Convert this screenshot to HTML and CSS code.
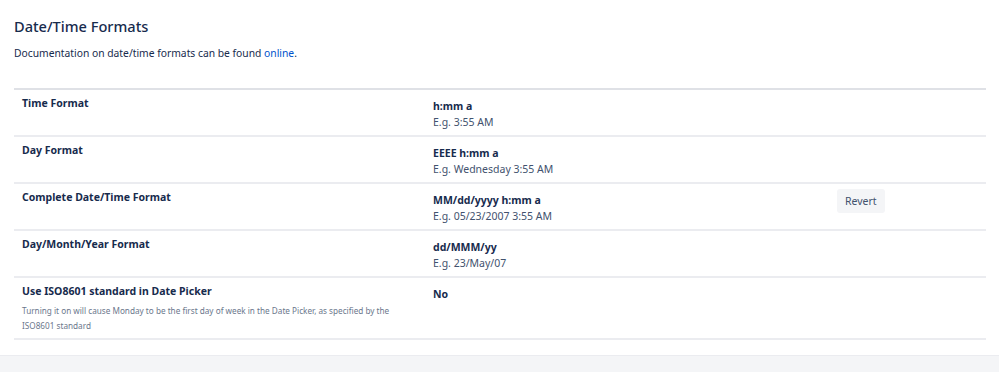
FILE: index.html
```html
<!DOCTYPE html>
<html lang="en">
<head>
<meta charset="UTF-8" />
<meta name="viewport" content="width=device-width, initial-scale=1" />
<title>Date/Time Formats</title>
<link rel="stylesheet" href="styles.css">
</head>
<body>

<main class="page">
  <h2 class="title">Date/Time Formats</h2>
  <p class="intro">Documentation on date/time formats can be found <a href="#">online</a>.</p>

  <table class="formats">
    <tbody>
      <tr>
        <th>Time Format</th>
        <td class="value">
          <strong>h:mm a</strong>
          <div class="example">E.g. 3:55 AM</div>
        </td>
        <td class="action"></td>
      </tr>
      <tr>
        <th>Day Format</th>
        <td class="value">
          <strong>EEEE h:mm a</strong>
          <div class="example">E.g. Wednesday 3:55 AM</div>
        </td>
        <td class="action"></td>
      </tr>
      <tr>
        <th>Complete Date/Time Format</th>
        <td class="value">
          <strong>MM/dd/yyyy h:mm a</strong>
          <div class="example">E.g. 05/23/2007 3:55 AM</div>
        </td>
        <td class="action"><button class="revert">Revert</button></td>
      </tr>
      <tr>
        <th>Day/Month/Year Format</th>
        <td class="value">
          <strong>dd/MMM/yy</strong>
          <div class="example">E.g. 23/May/07</div>
        </td>
        <td class="action"></td>
      </tr>
      <tr>
        <th>
          Use ISO8601 standard in Date Picker
          <div class="hint">Turning it on will cause Monday to be the first day of week in the Date Picker, as specified by the ISO8601 standard</div>
        </th>
        <td class="value"><strong>No</strong></td>
        <td class="action"></td>
      </tr>
    </tbody>
  </table>
</main>

<footer class="footer"></footer>

</body>
</html>
```

FILE: styles.css
```css
body {
  margin: 0;
  font-family: "Noto Sans", "Open Sans", sans-serif;
  font-size: 10.5px;
  color: #172b4d;
  background: #fff;
}
.page {
  padding: 15px 13px 0 14px;
}
.title {
  font-size: 14.6px;
  font-weight: 500;
  margin: 0 0 7px;
  line-height: 22px;
}
.intro {
  font-size: 10.3px;
  margin: 0 0 26px;
  line-height: 18px;
}
.intro a {
  color: #0052cc;
  text-decoration: none;
}
.formats {
  width: 100%;
  border-collapse: collapse;
  border-top: 2px solid #dfe1e6;
}
.formats tr {
  border-bottom: 2px solid #ebecf0;
}
.formats th {
  width: 395px;
  text-align: left;
  vertical-align: top;
  font-weight: 700;
  padding: 5px 8px 5px;
  line-height: 16px;
}
.formats td {
  vertical-align: top;
  padding: 8px 8px 5px;
  line-height: 16px;
}
.formats .value {
  width: 388px;
}
.example {
  color: #42526e;
}
.hint {
  font-size: 8.2px;
  font-weight: 400;
  color: #6b778c;
  line-height: 15px;
  margin-top: 4px;
  max-width: 375px;
}
.formats .action {
  padding-top: 5px;
}
.revert {
  font-family: inherit;
  font-size: 10.5px;
  color: #42526e;
  background: #f4f5f7;
  border: none;
  border-radius: 3px;
  height: 24px;
  padding: 0 8px;
  cursor: pointer;
}
.footer {
  margin-top: 15px;
  height: 16px;
  background: #f4f5f7;
  border-top: 1px solid #ebecf0;
}
```
